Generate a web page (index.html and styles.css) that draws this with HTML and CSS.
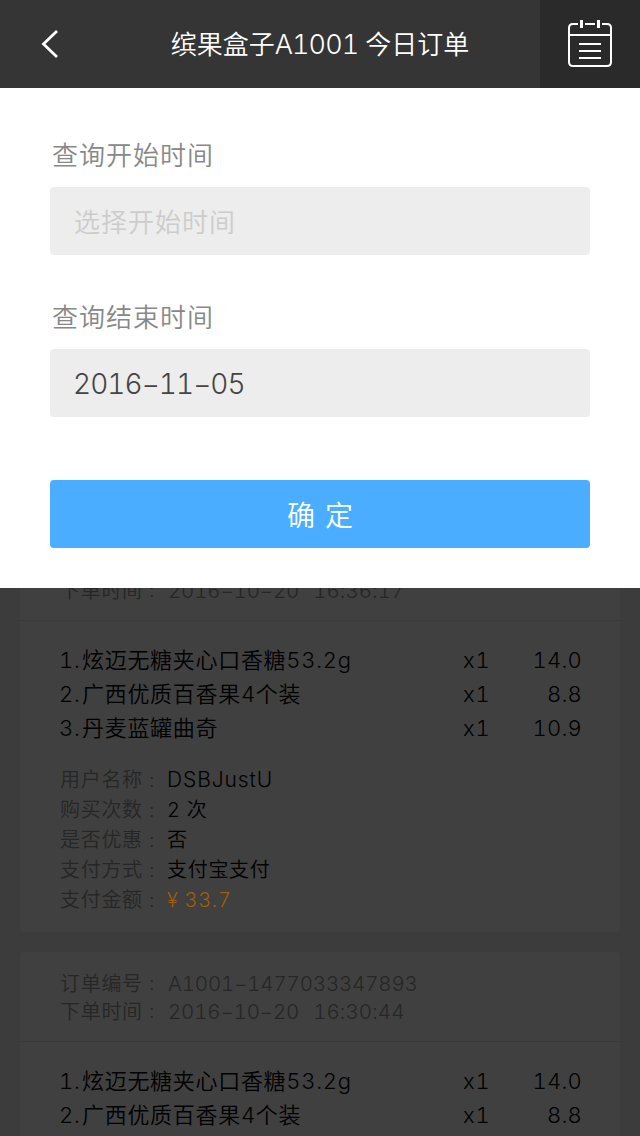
FILE: index.html
```html
<!DOCTYPE html>
<html lang="zh-CN">
<head>
<meta charset="utf-8">
<title>今日订单</title>
<link rel="stylesheet" href="styles.css">
</head>
<body>
<header class="topbar">
  <svg class="back" viewBox="0 0 24 32" fill="none" stroke="#fff" stroke-width="2.8"><path d="M19 3 5.500 16 19 29"/></svg>
  <h1 class="title">缤果盒子<span class="title-code">A1001</span> 今日订单</h1>
  <button class="calendar" aria-label="日期">
    <svg width="46" height="50" viewBox="0 0 46 50" fill="none" stroke="#fff" stroke-width="2"><path d="M11 5H6Q2 5 2 9V43Q2 47 6 47H40Q44 47 44 43V9Q44 5 40 5H35M18 5H28M2 16H44M12 25H34M12 32H34M12 39H34"/><path stroke-width="3" d="M14.5 1v8M31.5 1v8"/></svg>
  </button>
</header>
<form class="filter">
  <label class="label">查询开始时间</label>
  <div class="field placeholder">选择开始时间</div>
  <label class="label second">查询结束时间</label>
  <div class="field date">2016−11−05</div>
  <button class="confirm" type="button">确<span class="confirm-end">定</span></button>
</form>
<main class="orders">
  <div class="order-list">
    <article class="card">
      <div class="card-head">
        <div class="meta"><span class="key">下单时间</span><span class="colon">:</span><span class="day">2016−10−20</span><span class="clock">16:36:17</span></div>
      </div>
      <div class="items">
        <div class="item"><span class="num">1.</span><span class="name">炫迈无糖夹心口香糖<span class="size">53.2g</span></span><span class="qty">x1</span><span class="price">14.0</span></div>
        <div class="item"><span class="num">2.</span><span class="name">广西优质百香果4个装</span><span class="qty">x1</span><span class="price">8.8</span></div>
        <div class="item"><span class="num">3.</span><span class="name">丹麦蓝罐曲奇</span><span class="qty">x1</span><span class="price">10.9</span></div>
      </div>
      <div class="details">
        <div class="detail"><span class="key">用户名称</span><span class="colon">:</span><span class="value user">DSBJustU</span></div>
        <div class="detail"><span class="key">购买次数</span><span class="colon">:</span><span class="value">2 次</span></div>
        <div class="detail"><span class="key">是否优惠</span><span class="colon">:</span><span class="value">否</span></div>
        <div class="detail"><span class="key">支付方式</span><span class="colon">:</span><span class="value">支付宝支付</span></div>
        <div class="detail"><span class="key">支付金额</span><span class="colon">:</span><span class="value amount">¥ 33.7</span></div>
      </div>
    </article>
    <article class="card">
      <div class="card-head">
        <div class="meta"><span class="key">订单编号</span><span class="colon">:</span><span class="code">A1001−1477033347893</span></div>
        <div class="meta"><span class="key">下单时间</span><span class="colon">:</span><span class="day">2016−10−20</span><span class="clock">16:30:44</span></div>
      </div>
      <div class="items">
        <div class="item"><span class="num">1.</span><span class="name">炫迈无糖夹心口香糖<span class="size">53.2g</span></span><span class="qty">x1</span><span class="price">14.0</span></div>
        <div class="item"><span class="num">2.</span><span class="name">广西优质百香果4个装</span><span class="qty">x1</span><span class="price">8.8</span></div>
      </div>
    </article>
  </div>
</main>
</body>
</html>
```
FILE: styles.css
```css
* { box-sizing: border-box; }
body {
  margin: 0;
  width: 640px;
  height: 1136px;
  overflow: hidden;
  display: flex;
  flex-direction: column;
  background: #3c3c3c;
  font-family: Inter, "Noto Sans CJK SC DemiLight", "Noto Sans CJK SC", sans-serif;
  font-weight: 350;
  font-variant-numeric: tabular-nums;
}
button { border: 0; padding: 0; font: inherit; }
.topbar {
  height: 88px;
  flex: none;
  display: grid;
  grid-template-columns: 100px 440px 100px;
  align-items: center;
  background: #353535;
  color: #fff;
}
.back { width: 24px; height: 32px; margin-left: 38px; }
.title { margin: 0; text-align: center; font-size: 26px; font-weight: 350; line-height: 88px; height: 88px; padding-top: 1px; white-space: nowrap; }
.title-code { font-size: 27px; letter-spacing: -.9px; }
.calendar { height: 88px; background: #2a2a2a; display: flex; align-items: center; justify-content: center; }
.filter { height: 500px; flex: none; padding: 48px 50px 40px; background: #fff; display: flex; flex-direction: column; }
.label { height: 40px; line-height: 40px; padding-left: 2px; font-size: 26px; letter-spacing: 1px; color: #888; }
.second { margin-top: 43px; }
.field { height: 68px; margin-top: 11px; padding-left: 24px; line-height: 72px; background: #ededed; border-radius: 4px; font-size: 26px; letter-spacing: 1px; }
.placeholder { color: #ccc; }
.date { padding-left: 23px; color: #444; font-size: 28px; line-height: 70px; letter-spacing: -.95px; }
.confirm { height: 68px; margin-top: 63px; border-radius: 4px; background: #4aadff; color: #fff; font-size: 28px; font-weight: 350; display: flex; justify-content: center; align-items: center; gap: 10px; }
.orders { flex: 1; min-height: 0; overflow: hidden; padding: 0 20px; }
.order-list { display: flex; flex-direction: column; gap: 20px; margin-top: -29px; }
.card { flex: none; background: #404040; border-radius: 4px; padding-bottom: 18px; color: #000; }
.card-head { padding: 17px 40px 16px; border-bottom: 1px solid #3a3a3a; color: #262626; }
.meta, .detail { display: flex; font-size: 20px; letter-spacing: .7px; white-space: nowrap; }
.meta { line-height: 29px; height: 28px; }
.detail { line-height: 32px; height: 30px; }
.user { line-height: 31px; }
.key { width: 89px; flex: none; color: #262626; }
.colon { width: 18px; flex: none; color: #262626; }
.meta .key { line-height: 30px; }
.code, .day, .clock { font-size: 20.5px; letter-spacing: -.15px; }
.code, .day { margin-left: 1px; }
.clock { margin-left: 14px; letter-spacing: .1px; }
.items { padding: 21px 38px 0 40px; }
.item { display: grid; grid-template-columns: 22px 1fr 60px 60px; line-height: 36px; height: 34px; font-size: 22px; letter-spacing: .7px; white-space: nowrap; }
.num { margin-left: -1px; }
.qty { padding-left: 1px; }
.price { text-align: right; letter-spacing: .2px; }
.details { margin-top: 20px; padding: 0 40px; }
.user { font-size: 21px; letter-spacing: .9px; }
.amount { color: #9d5f0b; }
```
